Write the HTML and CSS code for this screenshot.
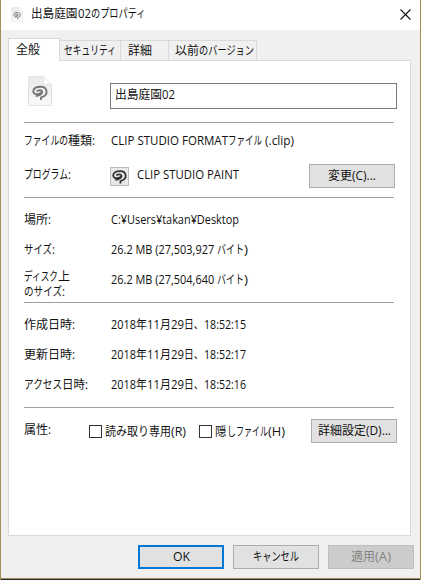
FILE: index.html
```
<!DOCTYPE html>
<html lang="ja">
<head>
<meta charset="utf-8">
<title>出島庭園02のプロパティ</title>
<link rel="stylesheet" href="styles.css">
</head>
<body>
<svg width="0" height="0" class="defs">
  <linearGradient id="paper" x1="0" y1="0" x2="0" y2="1"><stop offset="0" stop-color="#e9e9e9"/><stop offset="1" stop-color="#fafafa"/></linearGradient>
  <symbol id="swirl" viewBox="0 0 16 16">
    <path d="M9 15V12.4C12.6 11.4 14.8 9.4 14.6 6.6C14.3 3.6 11.8 1.8 8.8 1.8C5 1.8 1.6 3.2 1.3 6C1.1 8.2 3 9.4 5.4 9.2C7.6 9 9.4 8.2 10.2 6.8M4.6 6.2C7 4.8 10 4.8 10.2 6.8C10.2 9 7.4 10.8 3.6 11" fill="none" stroke="currentColor" stroke-width="1.9" stroke-linejoin="round"/>
  </symbol>
  <symbol id="file" viewBox="0 0 24 30">
    <path d="M.5.5H15.5L23.5 8.5V29.5H.5Z" fill="url(#paper)" stroke="#e2e2e2"/>
    <path d="M15.5.5V8.5H23.5Z" fill="#fff" stroke="#e6e6e6"/>
    <use href="#swirl" x="4" y="9" width="16" height="16" color="#777"/>
  </symbol>
</svg>
<div class="window">
  <header class="titlebar">
    <svg class="title-icon"><use href="#file"/></svg>
    <h1 class="text"><span data-w="46.5">出島庭園</span><span data-w="13">02</span><span data-w="54.5">のプロパティ</span></h1>
    <svg class="close" viewBox="0 0 11 11"><path d="M.5.5L10.5 10.5M10.5.5L.5 10.5" stroke="#111" stroke-width="1.1"/></svg>
  </header>
  <main class="body">
    <nav class="tabs">
      <div class="tab active"><div class="text"><span data-w="24">全般</span></div></div>
      <div class="tab security"><div class="text"><span data-w="52">セキュリティ</span></div></div>
      <div class="tab details"><div class="text"><span data-w="24">詳細</span></div></div>
      <div class="tab versions"><div class="text"><span data-w="24">以前</span><span data-w="55">のバージョン</span></div></div>
    </nav>
    <section class="panel">
      <div class="name-row">
        <svg class="file-icon"><use href="#file"/></svg>
        <div class="field"><div class="text"><span data-w="47">出島庭園</span><span data-w="13">02</span></div></div>
      </div>
      <div class="group kind">
        <div class="row type"><div class="label text"><span data-w="44">ファイルの</span><span data-w="24">種類</span><span data-w="3">:</span></div><div class="text"><span data-w="117">CLIP STUDIO FORMAT</span><span data-w="34">ファイル</span><span data-w="32"> (.clip)</span></div></div>
        <div class="row program"><div class="label text"><span data-w="44">プログラム</span><span data-w="3">:</span></div>
          <svg class="app-icon"><use href="#swirl" x="1" y="1" width="15" height="16"/></svg>
          <div class="text"><span data-w="102">CLIP STUDIO PAINT</span></div>
          <div class="button change"><div class="text"><span data-w="24">変更</span><span data-w="24">(C)...</span></div></div>
        </div>
      </div>
      <div class="group location">
        <div class="row"><div class="label text"><span data-w="24">場所</span><span data-w="3">:</span></div><div class="text"><span data-w="128">C:¥Users¥takan¥Desktop</span></div></div>
        <div class="row"><div class="label text"><span data-w="28">サイズ</span><span data-w="3">:</span></div><div class="text"><span data-w="106">26.2 MB (27,503,927 </span><span data-w="27">バイト</span><span data-w="4">)</span></div></div>
        <div class="row"><div class="label two-line"><div class="text"><span data-w="34">ディスク</span><span data-w="12">上</span></div><div class="text"><span data-w="38">のサイズ</span><span data-w="3">:</span></div></div><div class="text"><span data-w="106">26.2 MB (27,504,640 </span><span data-w="27">バイト</span><span data-w="4">)</span></div></div>
      </div>
      <div class="group dates">
        <div class="row"><div class="label text"><span data-w="48">作成日時</span><span data-w="3">:</span></div><div class="text"><span data-w="25">2018</span><span data-w="11">年</span><span data-w="13">11</span><span data-w="11">月</span><span data-w="13">29</span><span data-w="19.5">日、</span><span data-w="42">18:52:15</span></div></div>
        <div class="row"><div class="label text"><span data-w="48">更新日時</span><span data-w="3">:</span></div><div class="text"><span data-w="25">2018</span><span data-w="11">年</span><span data-w="13">11</span><span data-w="11">月</span><span data-w="13">29</span><span data-w="19.5">日、</span><span data-w="42">18:52:17</span></div></div>
        <div class="row"><div class="label text"><span data-w="38">アクセス</span><span data-w="23">日時</span><span data-w="3">:</span></div><div class="text"><span data-w="25">2018</span><span data-w="11">年</span><span data-w="13">11</span><span data-w="11">月</span><span data-w="13">29</span><span data-w="19.5">日、</span><span data-w="42">18:52:16</span></div></div>
      </div>
      <div class="group attributes">
        <div class="attr-label text"><span data-w="24">属性</span><span data-w="3">:</span></div>
        <div class="check readonly"><i class="box"></i><div class="text"><span data-w="66">読み取り専用</span><span data-w="15">(R)</span></div></div>
        <div class="check"><i class="box"></i><div class="text"><span data-w="11.5">隠</span><span data-w="9">し</span><span data-w="32">ファイル</span><span data-w="17">(H)</span></div></div>
        <div class="button advanced"><div class="text"><span data-w="48">詳細設定</span><span data-w="25">(D)...</span></div></div>
      </div>
    </section>
    <footer class="actions">
      <div class="button primary"><div class="text"><span data-w="17">OK</span></div></div>
      <div class="button"><div class="text"><span data-w="46">キャンセル</span></div></div>
      <div class="button disabled"><div class="text"><span data-w="24">適用</span><span data-w="16">(A)</span></div></div>
    </footer>
  </main>
</div>
<script src="fit.js"></script>
</body>
</html>
```
FILE: styles.css
```
* { box-sizing: border-box; }
body {
  margin: 0;
  background: #fff;
  color: #111;
  font: 12px/16px "Open Sans", "Noto Sans CJK JP", sans-serif;
}
.defs { position: absolute; }
svg { display: block; flex: none; }
.window {
  width: 421px;
  height: 580px;
  display: flex;
  flex-direction: column;
  border: 1px solid #a58c57;
  border-top: 0;
  border-bottom: 0;
  box-shadow: inset 0 -1px #252b33, inset 0 -2px #a58c57;
  padding-bottom: 2px;
}
.text { display: flex; white-space: pre; height: 16px; font-size: 12px; font-weight: 400; margin: 0; flex: none; }
.text span { display: block; transform-origin: 0 50%; flex: none; }
.titlebar { height: 30px; background: #fff; display: flex; align-items: center; padding: 0 9px 2px 10px; }
.title-icon { width: 12px; height: 15px; margin-right: 8px; }
.close { width: 11px; height: 11px; margin-left: auto; }
.body { flex: 1; background: #f0f0f0; padding: 8px 9px 0 7px; }
.tabs { height: 22px; display: flex; align-items: flex-end; }
.tab {
  height: 20px;
  display: flex;
  align-items: center;
  border: 1px solid #d9d9d9;
  border-left: 0;
  border-bottom: 0;
}
.tab.active {
  width: 52px;
  height: 23px;
  margin-bottom: -1px;
  padding: 0 0 1px 7px;
  background: #fff;
  border-left: 1px solid #d9d9d9;
  position: relative;
}
.security { width: 61px; padding-left: 4px; }
.details { width: 48px; padding-left: 7px; }
.versions { width: 88px; padding-left: 6px; }
.panel { height: 476px; width: 403px; background: #fff; border: 1px solid #d9d9d9; padding: 0 15px; }
.name-row { height: 61px; padding: 15px 0 0 4px; display: flex; }
.file-icon { width: 24px; height: 30px; margin-right: 58px; }
.field { width: 287px; height: 26px; margin-top: 7px; flex: none; border: 1px solid #7a7a7a; padding: 3px 4px; }
.group { width: 370px; border-top: 1px solid #a0a0a0; }
.row { height: 30px; display: flex; align-items: center; }
.label { width: 87px; }
.kind { height: 75px; padding-top: 3px; }
.program { height: 36px; margin-top: 2px; }
.type + .program .label { width: 86px; margin-top: -2px; }
.program > .text:not(.label) { margin-top: -2px; }
.app-icon { width: 19px; height: 19px; margin-right: 8px; border: 1px solid #bcbcbc; background: #e8e8e8; color: #333; }
.button {
  width: 86px;
  height: 24px;
  flex: none;
  border: 1px solid #adadad;
  background: #e1e1e1;
  display: flex;
  align-items: center;
  justify-content: center;
}
.change { margin-left: auto; margin-right: -1px; }
.location { height: 105px; padding-top: 7px; }
.two-line .text { height: 15px; line-height: 15px; }
.two-line { padding-top: 7px; }
.dates { height: 105px; padding-top: 7px; }
.attributes { display: flex; }
.attr-label { width: 65px; margin-top: 14px; }
.check { display: flex; height: 16px; margin-top: 16px; }
.readonly { width: 110px; }
.box { width: 13px; height: 13px; margin: 1px 3px 0 0; border: 1px solid #333; }
.advanced { margin: 11px -3px 0 auto; }
.actions { display: flex; gap: 9px; margin: 9px 0 0 130px; }
.primary { border: 2px solid #0078d7; }
.disabled { background: #ccc; border-color: #bfbfbf; color: #838383; }
```
FILE: fit.js
```
// Condenses each text run to the advance width of the dialog's UI typeface.
document.querySelectorAll('.text span').forEach(function (run) {
  var natural = run.getBoundingClientRect().width;
  var width = parseFloat(run.dataset.w);
  run.style.width = width + 'px';
  run.style.transform = 'scaleX(' + width / natural + ')';
});
```
